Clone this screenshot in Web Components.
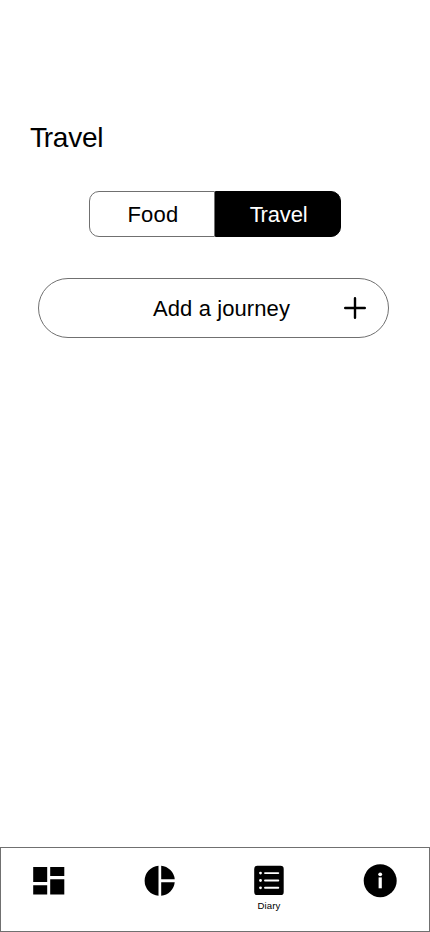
<!DOCTYPE html>
<html lang="en">
<head>
<meta charset="utf-8">
<title>Travel</title>
<style>
html,body{margin:0;height:100%;background:#fff}
body{font-family:"Liberation Sans",Arial,sans-serif;color:#000;overflow:hidden}
</style>
</head>
<body>
<diary-screen>
  <page-title slot="title">Travel</page-title>
  <segment-control slot="body">
    <segment-option>Food</segment-option>
    <segment-option selected>Travel</segment-option>
  </segment-control>
  <add-button slot="body">Add a journey</add-button>
  <tab-bar slot="tabs">
    <tab-item icon="dashboard"></tab-item>
    <tab-item icon="chart"></tab-item>
    <tab-item icon="list">Diary</tab-item>
    <tab-item icon="info"></tab-item>
  </tab-bar>
</diary-screen>
<script>
const define = (name, html, init) => {
  customElements.define(name, class extends HTMLElement {
    constructor() {
      super();
      this.attachShadow({mode: "open"}).innerHTML = html;
    }
    connectedCallback() { if (init) init(this); }
  });
};

define("diary-screen", `<style>
:host{display:flex;flex-direction:column;height:932px;width:430px;box-sizing:border-box;padding-top:122px}
main{flex:1;display:flex;flex-direction:column}
</style><slot name="title"></slot><main><slot name="body"></slot></main><slot name="tabs"></slot>`);

define("page-title", `<style>
:host{display:block;padding-left:30px;height:69px}
h1{margin:0;font-weight:400;font-size:28px;line-height:32px;letter-spacing:-.25px}
h1::first-letter{letter-spacing:-.12em}
</style><h1><slot></slot></h1>`);

define("segment-control", `<style>
:host{display:flex;width:252px;height:46px;margin:0 0 41px 89px}
</style><slot></slot>`);

define("segment-option", `<style>
:host{flex:1;display:flex;align-items:center;justify-content:center;box-sizing:border-box;border:1px solid #707070;border-radius:10px 0 0 10px;font-size:22px;line-height:26px;padding:1px 0 0 1.5px;letter-spacing:.2px}
:host([selected]){background:#000;color:#fff;border-color:#000;border-radius:0 10px 10px 0;letter-spacing:-.15px;padding-left:1px}
div{display:block}
:host([selected]) div::first-letter{letter-spacing:-.12em}
</style><div><slot></slot></div>`);

define("add-button", `<style>
:host{display:flex;align-items:center;width:351px;height:60px;margin-left:38px;box-sizing:border-box;border:1px solid #707070;border-radius:30px;padding:0 21px 0 114px;font-size:22px;line-height:26px;letter-spacing:.1px}
span{flex:1;padding-top:1px;white-space:nowrap}
svg{display:block}
</style><span><slot></slot></span><svg width="24" height="24" viewBox="0 0 24 24"><path d="M12 2.2v19.6M2.2 12h19.6" stroke="#000" stroke-width="2.4" stroke-linecap="round"/></svg>`);

define("tab-bar", `<style>
:host{display:grid;grid-template-columns:repeat(4,110.5px);justify-content:center;height:85px;box-sizing:border-box;border:1px solid #707070;padding:16px 2.5px 0 0;overflow:hidden}
</style><slot></slot>`);

const icons = {
  dashboard: `<path d="M3.2 3h14v15H3.2zM20.2 3h14.1v9.1H20.2zM3.2 21.3h14v9.2H3.2zM20.2 15.3h14.1v15.2H20.2z"/>`,
  chart: `<path d="M17.5 1.75v30.1A15.1 15.1 0 0 1 17.5 1.75zM20.2 1.78A15.1 15.1 0 0 1 33.73 15.3H20.2zM20.2 18.3H33.73A15.1 15.1 0 0 1 20.2 31.82z"/>`,
  list: `<rect x="3.2" y="1.8" width="29.5" height="29.3" rx="3.2"/><path d="M14 9.1h13.3M14 16.5h13.3M14 23.8h13.3" stroke="#fff" stroke-width="1.9" stroke-linecap="round"/><g fill="#fff"><circle cx="9.5" cy="9.1" r="1.4"/><circle cx="9.5" cy="16.5" r="1.4"/><circle cx="9.5" cy="23.8" r="1.4"/></g>`,
  info: `<circle cx="18.2" cy="16.7" r="16.5"/><circle cx="18.2" cy="10.3" r="1.9" fill="#fff"/><path d="M16.6 13.4h3.2v10.9h-3.2z" fill="#fff"/>`
};
define("tab-item", `<style>
:host{display:flex;flex-direction:column;align-items:center;font-size:9.6px;line-height:12px;letter-spacing:.15px}
svg{display:block;width:36px;height:36px;overflow:visible}
</style><svg viewBox="0 0 36 36"></svg><slot></slot>`, el => {
  el.shadowRoot.querySelector("svg").innerHTML = icons[el.getAttribute("icon")];
});
</script>
</body>
</html>
